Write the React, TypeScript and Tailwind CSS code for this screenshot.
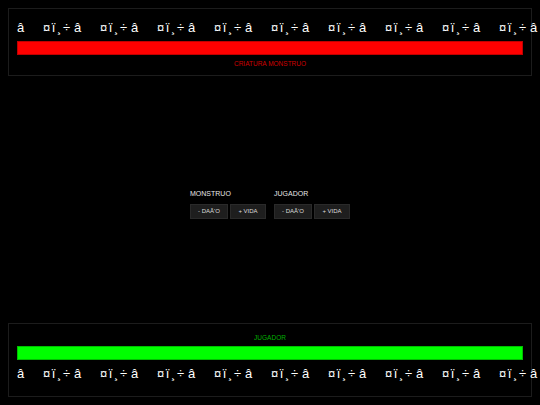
const HEART = "¤ï¸÷";

function Hearts() {
  return (
    <div className="flex h-[20px] items-center whitespace-nowrap text-[13px] leading-none text-white">
      <span className="w-[26px] shrink-0">â</span>
      {Array.from({ length: 9 }).map((_, i) => (
        <span key={i} className="flex w-[57px] shrink-0">
          <span className="w-[31px] tracking-[1.6px]">{HEART}</span>
          <span>â</span>
        </span>
      ))}
    </div>
  );
}

function Bar({ color }: { color: "red" | "green" }) {
  return (
    <div
      className={
        color === "red"
          ? "h-[14px] w-full border border-[#c00000] bg-[#ff0000]"
          : "h-[14px] w-full border border-[#00c000] bg-[#00ff00]"
      }
    />
  );
}

function Controls({ title }: { title: string }) {
  return (
    <div className="flex flex-col">
      <div className="mb-[5px] text-[7px] font-normal leading-[10px] text-[#e6e6e6]">{title}</div>
      <div className="flex gap-[2px]">
        <button className="h-[15px] w-[38px] border border-[#2a2a2a] bg-[#1e1e1e] text-[6px] text-[#dddddd]">
          - DAÃ'O
        </button>
        <button className="h-[15px] w-[36px] border border-[#2a2a2a] bg-[#1e1e1e] text-[6px] text-[#dddddd]">
          + VIDA
        </button>
      </div>
    </div>
  );
}

export default function App() {
  return (
    <div
      className="flex h-[405px] w-[540px] flex-col justify-between overflow-hidden bg-black p-2"
      style={{ fontFamily: '"Liberation Sans", Arial, sans-serif' }}
    >
      {/* Monster panel */}
      <div className="flex h-[68px] flex-col border border-[#1c1c1c] px-2 pt-[8px]">
        <Hearts />
        <div className="mt-[4px]">
          <Bar color="red" />
        </div>
        <div className="mt-[4px] text-center text-[6.5px] leading-[9px] text-[#d00000]">
          CRIATURA MONSTRUO
        </div>
      </div>

      {/* Controls */}
      <div className="flex justify-center gap-[8px] pt-[8px]">
        <Controls title="MONSTRUO" />
        <Controls title="JUGADOR" />
      </div>

      {/* Player panel */}
      <div className="flex h-[74px] flex-col border border-[#1c1c1c] px-2 pt-[9px]">
        <div className="text-center text-[6.5px] leading-[9px] text-[#00b000]">JUGADOR</div>
        <div className="mt-[4px]">
          <Bar color="green" />
        </div>
        <div className="mt-[3px]">
          <Hearts />
        </div>
      </div>
    </div>
  );
}
